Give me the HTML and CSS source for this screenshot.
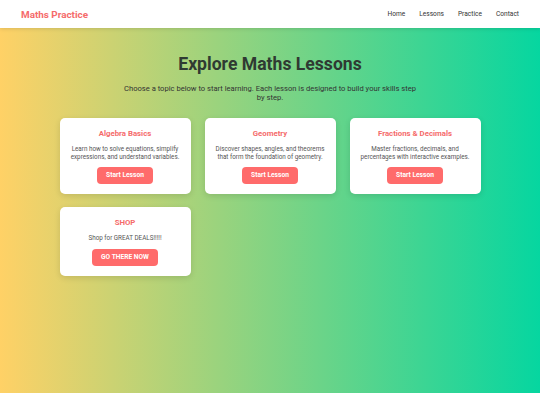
FILE: index.html
```html
<!DOCTYPE html>
<html lang="en">
<head>
<meta charset="utf-8">
<title>Maths Practice</title>
<link rel="stylesheet" href="styles.css">
</head>
<body>
<header class="site-header">
  <div class="logo">Maths Practice</div>
  <nav class="nav">
    <a href="#">Home</a>
    <a href="#">Lessons</a>
    <a href="#">Practice</a>
    <a href="#">Contact</a>
  </nav>
</header>
<main class="hero">
  <h1 class="title">Explore Maths Lessons</h1>
  <p class="subtitle">Choose a topic below to start learning. Each lesson is designed to build your skills step by step.</p>
  <div class="grid">
    <div class="card">
      <h2 class="card-title">Algebra Basics</h2>
      <p class="card-text">Learn how to solve equations, simplify expressions, and understand variables.</p>
      <a class="btn" href="#">Start Lesson</a>
    </div>
    <div class="card">
      <h2 class="card-title">Geometry</h2>
      <p class="card-text">Discover shapes, angles, and theorems that form the foundation of geometry.</p>
      <a class="btn" href="#">Start Lesson</a>
    </div>
    <div class="card">
      <h2 class="card-title">Fractions &amp; Decimals</h2>
      <p class="card-text">Master fractions, decimals, and percentages with interactive examples.</p>
      <a class="btn" href="#">Start Lesson</a>
    </div>
    <div class="card card-shop">
      <h2 class="card-title">SHOP</h2>
      <p class="card-text">Shop for GREAT DEALS!!!!!</p>
      <a class="btn" href="#">GO THERE NOW</a>
    </div>
  </div>
</main>
</body>
</html>
```
FILE: styles.css
```css
* { box-sizing: border-box; }
html, body { margin: 0; padding: 0; }
body {
  font-family: Roboto, "Liberation Sans", Arial, sans-serif;
  background: #ffffff;
  color: #333;
  height: 405px;
  overflow: hidden;
}
.site-header {
  height: 28px;
  background: #fff;
  display: flex;
  align-items: center;
  justify-content: space-between;
  padding: 0 21px;
  box-shadow: 0 1px 4px rgba(0,0,0,0.12);
  position: relative;
  z-index: 1;
}
.logo {
  color: #f56b6b;
  font-weight: 700;
  font-size: 9.9px;
}
.nav {
  display: flex;
  gap: 14px;
}
.nav a {
  color: #333;
  text-decoration: none;
  font-size: 6.6px;
}
.hero {
  height: 365px;
  background: linear-gradient(90deg, #FFD166 0%, #06D6A0 100%);
  padding-top: 25px;
  display: flex;
  flex-direction: column;
  align-items: center;
}
.title {
  margin: 0;
  font-size: 17.6px;
  font-weight: 700;
  color: #2f3a32;
  line-height: 22px;
}
.subtitle {
  margin: 8.5px 0 0;
  max-width: 296px;
  text-align: center;
  font-size: 7.6px;
  line-height: 9px;
  color: #333;
}
.grid {
  margin-top: 16.5px;
  width: 421px;
  display: grid;
  grid-template-columns: repeat(3, 1fr);
  column-gap: 14px;
  row-gap: 13px;
}
.card {
  background: #fff;
  border-radius: 5px;
  box-shadow: 0 2px 6px rgba(0,0,0,0.12);
  padding: 9.5px 8px 10px;
  display: flex;
  flex-direction: column;
  align-items: center;
  text-align: center;
}
.card-title {
  margin: 0;
  font-size: 7.8px;
  line-height: 11px;
  font-weight: 700;
  color: #f56b6b;
}
.card-text {
  margin: 6px 0 6.5px;
  font-size: 6.3px;
  line-height: 8px;
  color: #555;
}
.card-shop .card-text {
  margin-bottom: 7.5px;
}
.btn {
  display: inline-block;
  background: #ff6b6b;
  color: #fff;
  text-decoration: none;
  font-size: 6.65px;
  font-weight: 700;
  line-height: 17px;
  height: 17px;
  padding: 0 9px;
  border-radius: 4px;
}
```
